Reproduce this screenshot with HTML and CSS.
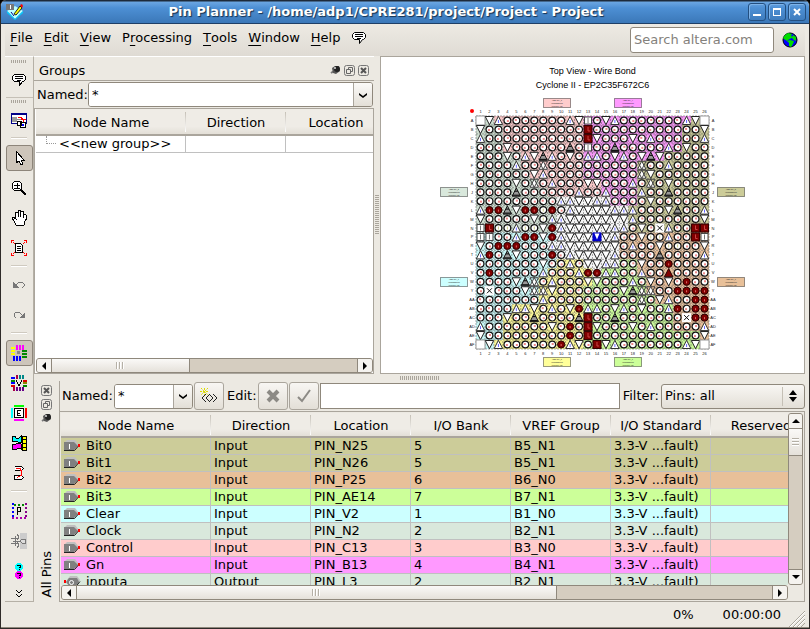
FILE: index.html
```html
<!DOCTYPE html>
<html lang="en">
<head>
    <meta charset="UTF-8">
    <meta name="viewport" content="width=device-width, initial-scale=1.0">
    <title>Pin Planner</title>
    <link rel="stylesheet" href="styles.css">
</head>
<body>
    <!-- shared icons -->
    <svg class="defs" width="0" height="0">
        <symbol id="comment" viewBox="0 0 16 16">
            <path d="M3.500 2.500h9l2 2v3l-2 2h-1l-3 4v-4h-5l-2-2v-3z" fill="#fff" stroke="#000"/>
            <path d="M4 4.500h8M4 6.500h8M6 8.500h4" stroke="#000"/>
        </symbol>
        <symbol id="pushpin" viewBox="0 0 11 11">
            <path d="M1 8l3-2" stroke="#777" stroke-width="2"/>
            <path d="M2 3l3-2h4l1 5-4 3-3-1z" fill="#555"/>
            <circle cx="7" cy="4" r="3" fill="#222"/>
            <circle cx="5" cy="3" r="1" fill="#ddd"/>
        </symbol>
        <symbol id="float" viewBox="0 0 11 11">
            <rect x=".5" y=".5" width="10" height="10" rx="2" fill="none" stroke="#777"/>
            <path d="M4.500 4.500v-2h4v4h-2M2.500 4.500h4v4h-4z" fill="none" stroke="#666"/>
        </symbol>
        <symbol id="close" viewBox="0 0 11 11">
            <rect x=".5" y=".5" width="10" height="10" rx="2" fill="none" stroke="#777"/>
            <path d="M3 3l5 5M8 3l-5 5" stroke="#555" stroke-width="2"/>
        </symbol>
        <symbol id="down" viewBox="0 0 10 8">
            <path d="M1 2l4 3 4-3v2l-4 3-4-3z" fill="#000"/>
        </symbol>
        <symbol id="left" viewBox="0 0 8 8"><path d="M6 0v8L2 4z"/></symbol>
        <symbol id="right" viewBox="0 0 8 8"><path d="M2 0v8l4-4z"/></symbol>
        <symbol id="up-arrow" viewBox="0 0 8 8"><path d="M0 6h8L4 2z"/></symbol>
        <symbol id="down-arrow" viewBox="0 0 8 8"><path d="M0 2h8L4 6z"/></symbol>
        <symbol id="pin-in" viewBox="0 0 17 12">
            <path d="M1 2l2-2h8l4 5-4 4z" fill="#c0c0c0"/>
            <path d="M0 2h10l4 4-4 4H0z" fill="#808080"/>
            <path d="M0 10.500h10.500l4-4.500" fill="none" stroke="#222"/>
            <path d="M5.500 4v5" stroke="#fff"/>
            <path d="M14 4h2v3h-2z" fill="#f00"/>
        </symbol>
        <symbol id="pin-out" viewBox="0 0 17 12">
            <path d="M3 4l3-4h7l3 4-3 5z" fill="#c0c0c0"/>
            <path d="M2 6l3-4h8l2 4-3 4H5z" fill="#808080"/>
            <path d="M4 10.500h8l4-5" fill="none" stroke="#222"/>
            <circle cx="7.500" cy="6.500" r="2" fill="none" stroke="#fff"/>
            <path d="M0 4h2v3H0z" fill="#f00"/>
        </symbol>
    </svg>

    <header class="titlebar">
        <svg width="18" height="16" viewBox="0 0 18 16">
            <path d="M1 7l8-5 8 5-8 8z" fill="#bff"/>
            <path d="M1 7l8 8 8-8v2l-8 7-8-7z" fill="#0cf"/>
            <path d="M0 0h8v6H0z" fill="#777"/><path d="M4.500 1v4" stroke="#fff"/>
            <path d="M8 10l6-8 2 2-6 7z" fill="#ff0" stroke="#222"/>
            <path d="M14 1l2-1 1 2-1 2z" fill="#f00"/>
            <path d="M5 8l3 4" stroke="#008"/>
        </svg>
        <h1>Pin Planner - /home/adp1/CPRE281/project/Project - Project</h1>
        <div class="win-buttons">
            <button aria-label="Minimize"><svg width="10" height="10"><path d="M1 7h8v2H1z" fill="#fff"/></svg></button>
            <button aria-label="Maximize"><svg width="10" height="10"><path d="M1 1h8v8H1zM2 3v5h6V3z" fill="#fff" fill-rule="evenodd"/></svg></button>
            <button aria-label="Close window"><svg width="10" height="10"><path d="M2 2l6 6M8 2l-6 6" stroke="#fff" stroke-width="2"/></svg></button>
        </div>
    </header>

    <nav class="menubar">
        <a href="#"><u>F</u>ile</a>
        <a href="#"><u>E</u>dit</a>
        <a href="#"><u>V</u>iew</a>
        <a href="#">P<u>r</u>ocessing</a>
        <a href="#"><u>T</u>ools</a>
        <a href="#"><u>W</u>indow</a>
        <a href="#"><u>H</u>elp</a>
        <a href="#" aria-label="Feedback"><svg width="16" height="16"><use href="#comment"/></svg></a>
        <input class="search" type="text" placeholder="Search altera.com" aria-label="Search altera.com">
        <button class="globe" aria-label="Search the web">
            <svg width="16" height="16" viewBox="0 0 16 16">
                <circle cx="8" cy="8" r="7" fill="#00f" stroke="#000"/>
                <path d="M3 3l3-2 4 1-1 2 2 1-3 2-2 1-1 1-3-2-1-1zM11 3l3 2v4l-2-1-2-2zM8 8l4 1-1 3-2 3-2-1v-3L5 9z" fill="#0d0"/>
            </svg>
        </button>
    </nav>

    <main>
        <aside class="tools">
            <div class="handle"></div>
            <button aria-label="Comment"><svg width="16" height="16"><use href="#comment"/></svg></button>
            <div class="handle second"></div>
            <button aria-label="Detach window">
                <svg width="16" height="16" viewBox="0 0 16 16">
                    <path d="M.5 1.500h15v10H.5z" fill="#fff" stroke="#008"/><path d="M0 1h16v2H0z" fill="#008"/>
                    <path d="M1 5h5v5H1z" fill="#999"/><path d="M6 7.500h4" stroke="#888"/>
                    <path d="M7 5.500h3l2 2v2M10 7.500h5" fill="none" stroke="#f00"/>
                    <path d="M6.500 9.500h4v4h-4zM9.500 10.500h5v5h-5z" fill="#fff" stroke="#000"/><path d="M12 12v2" stroke="#00f" stroke-width="2"/>
                </svg>
            </button>
            <hr>
            <button class="pressed" aria-label="Select">
                <svg width="16" height="16" viewBox="0 0 16 16"><path d="M5 1v12l3-2 2 4 2-1-2-4h3z" fill="#fff" stroke="#000"/></svg>
            </button>
            <button aria-label="Zoom">
                <svg width="16" height="16" viewBox="0 0 16 16">
                    <circle cx="6" cy="6" r="5" fill="#fff" stroke="#000"/>
                    <path d="M3 5.500h6M6 3v5M3 8.500h6" stroke="#000"/><path d="M10 10l5 5" stroke="#000" stroke-width="2"/>
                </svg>
            </button>
            <button aria-label="Pan">
                <svg width="16" height="16" viewBox="0 0 16 16">
                    <path d="M5 15l-2-4-2-3 1-1 3 2-1-6 1-1 2 1V1l2-1 1 2 2-1 1 3 2 1 1 3-2 3-1 4z" fill="#fff" stroke="#000"/>
                    <path d="M7 3v4M9.500 2v5M12 4v4" stroke="#000"/>
                </svg>
            </button>
            <button aria-label="Fit in window">
                <svg width="16" height="16" viewBox="0 0 16 16">
                    <path d="M0 0l4 4M16 0l-4 4M0 16l4-4M16 16l-4-4" stroke="#f00" stroke-dasharray="2 1"/>
                    <path d="M.5 3V.5H3M13 .5h2.500V3M.5 13v2.500H3M13 15.500h2.500V13" fill="none" stroke="#f00"/>
                    <path d="M4.500 3.500h5l2 2v7h-7z" fill="#fff" stroke="#000"/><path d="M6 6.500h4M6 8.500h4M6 10.500h4" stroke="#000"/>
                </svg>
            </button>
            <hr>
            <button aria-label="Undo">
                <svg width="16" height="16" viewBox="0 0 16 16"><path d="M5 8l3-3h3l2 2v2l-2 2" fill="none" stroke="#777"/><path d="M2 5v6h6z" fill="#777"/></svg>
            </button>
            <button aria-label="Redo">
                <svg width="16" height="16" viewBox="0 0 16 16"><path d="M11 8L8 5H5L3 7v2l2 2" fill="none" stroke="#777"/><path d="M14 5v6H8z" fill="#777"/></svg>
            </button>
            <hr>
            <button class="pressed" aria-label="Show I/O banks">
                <svg width="16" height="16" viewBox="0 0 16 16">
                    <path d="M6 0v5M9 0v5M12 0v5" stroke="#f0f" stroke-width="2"/>
                    <path d="M0 3h4M0 6h4M0 9h4" stroke="#ff0" stroke-width="2"/>
                    <path d="M11 6h5M11 9h5M11 12h5" stroke="#080" stroke-width="2"/>
                    <path d="M3 11v5M6 11v5M9 11v5" stroke="#00f" stroke-width="2"/><path d="M6 6h3v3H6z" fill="#888"/>
                </svg>
            </button>
            <button aria-label="Show VREF groups">
                <svg width="16" height="16" viewBox="0 0 16 16">
                    <path d="M0 3h4M0 8h4" stroke="#00f" stroke-width="2"/><path d="M0 6h4M12 11h4" stroke="#080" stroke-width="2"/>
                    <path d="M6 0v4M3 12v4" stroke="#a04" stroke-width="2"/><path d="M9 0v4M12 0v4" stroke="#088" stroke-width="2"/>
                    <path d="M12 6h4M0 11h4" stroke="#d00" stroke-width="2"/><path d="M12 8h4" stroke="#880" stroke-width="2"/>
                    <path d="M6 12v4M9 12v4M12 12v4" stroke="#608" stroke-width="2"/><path d="M5 5l3 6 3-6" fill="none" stroke="#000"/>
                </svg>
            </button>
            <button aria-label="Show edges">
                <svg width="16" height="16" viewBox="0 0 16 16">
                    <path d="M3 1h10" stroke="#0f0" stroke-width="2"/><path d="M3 15h10" stroke="#f0f" stroke-width="2"/>
                    <path d="M1 3v10" stroke="#0ff" stroke-width="2"/><path d="M15 3v10" stroke="#f00" stroke-width="2"/>
                    <path d="M3.500 3.500h9v9h-9z" fill="#fff" stroke="#000"/><path d="M10 5.500H6.500v5H10M6 8h3" fill="none" stroke="#000"/>
                </svg>
            </button>
            <button aria-label="Show DQ pins">
                <svg width="16" height="16" viewBox="0 0 16 16">
                    <path d="M1 1h3l1 2h3l2-2v6H7L5 6 1 7z" fill="#0ff" stroke="#000"/>
                    <path d="M1 9h4l1-1 4 1v5l-3-1-2 2-4-1 1-3z" fill="#f0f" stroke="#000"/>
                    <path d="M11.500 1v14h4V1zM11 4.500h4M11 8.500h4M11 12.500h4" fill="#ff0" stroke="#000"/>
                </svg>
            </button>
            <button aria-label="Show differential pairs">
                <svg width="16" height="16" viewBox="0 0 16 16">
                    <path d="M3.500 1.500h7l2 2-2 2h-7M3.500 10.500h7l2 2-2 2h-7z" fill="#fff" stroke="#000"/>
                    <path d="M5 3.500h4l1 2v5l-4 2" fill="none" stroke="#f00"/>
                </svg>
            </button>
            <hr>
            <button aria-label="Show pads">
                <svg width="16" height="16" viewBox="0 0 16 16">
                    <path d="M1.500 0v16" stroke="#00f" stroke-width="2" stroke-dasharray="2 2"/><path d="M14.500 0v16" stroke="#808" stroke-width="2" stroke-dasharray="2 2"/>
                    <path d="M3 1.500h12" stroke="#080" stroke-width="2" stroke-dasharray="2 2"/><path d="M1 14.500h14" stroke="#a0a" stroke-width="2" stroke-dasharray="2 2"/>
                    <path d="M6.500 12V4.500h3v4h-3" fill="none" stroke="#000"/>
                </svg>
            </button>
            <button aria-label="Pin connections">
                <svg width="16" height="16" viewBox="0 0 16 16">
                    <path d="M9 0h7v16H9z" fill="#ccc"/>
                    <path d="M0 5.500h6M0 10.500h6M2 8h8M4 3v10M6 1l2 3-2 3M6 9l2 3-2 3" fill="none" stroke="#777"/>
                    <path d="M9 8l2-2h3v4h-3z" fill="#ddd" stroke="#777"/>
                </svg>
            </button>
            <button aria-label="Help">
                <svg width="16" height="18" viewBox="0 0 16 18">
                    <circle cx="8" cy="5" r="4" fill="#0ff"/><circle cx="8" cy="13" r="4" fill="#f0f"/>
                    <path d="M6.500 4l1-1h2v2l-1 1M8.500 7v1M6.500 12l1-1h2v2l-1 1M8.500 15v1" fill="none" stroke="#000"/>
                </svg>
            </button>
            <button class="more" aria-label="More tools">
                <svg width="8" height="10" viewBox="0 0 8 10"><path d="M1 1l3 3 3-3M1 5l3 3 3-3" fill="none" stroke="#000"/></svg>
            </button>
        </aside>

        <div class="workspace">
            <div class="top">
                <section class="groups">
                    <div class="dock-title">
                        <h2>Groups</h2>
                        <button aria-label="Pin Groups"><svg width="11" height="11"><use href="#pushpin"/></svg></button>
                        <button aria-label="Float Groups"><svg width="11" height="11"><use href="#float"/></svg></button>
                        <button aria-label="Close Groups"><svg width="11" height="11"><use href="#close"/></svg></button>
                    </div>
                    <div class="named">
                        <label for="group-name">Named:</label>
                        <div class="combo">
                            <input id="group-name" type="text" value="*">
                            <button aria-label="Group names"><svg width="10" height="8"><use href="#down"/></svg></button>
                        </div>
                    </div>
                    <div class="group-box">
                        <div class="table-wrap">
                            <table class="group-table">
                                <thead><tr><th>Node Name</th><th>Direction</th><th>Location</th></tr></thead>
                                <tbody><tr><td><span class="branch"></span>&lt;&lt;new group&gt;&gt;</td><td></td><td></td></tr></tbody>
                            </table>
                        </div>
                        <div class="hscroll short">
                            <button aria-label="Scroll left"><svg width="8" height="8"><use href="#left"/></svg></button>
                            <div class="thumb"><i class="grip"></i></div>
                            <div class="track"></div>
                            <button aria-label="Scroll right"><svg width="8" height="8"><use href="#right"/></svg></button>
                        </div>
                    </div>
                </section>
                <div class="splitter"></div>
                <section class="chip">
                    <p>Top View - Wire Bond</p>
                    <p>Cyclone II - EP2C35F672C6</p>
                    <svg id="package" width="306" height="272" viewBox="0 0 306 272"></svg>
                </section>
            </div>
            <div class="row-splitter"></div>
            <section class="pins">
                <div class="pins-side">
                    <button aria-label="Close All Pins"><svg width="11" height="11"><use href="#close"/></svg></button>
                    <button aria-label="Float All Pins"><svg width="11" height="11"><use href="#float"/></svg></button>
                    <button aria-label="Pin All Pins"><svg width="11" height="11"><use href="#pushpin"/></svg></button>
                    <h2>All Pins</h2>
                </div>
                <div class="pins-main">
                    <div class="filter-bar">
                        <label for="pin-name">Named:</label>
                        <div class="combo small">
                            <input id="pin-name" type="text" value="*">
                            <button aria-label="Pin names"><svg width="10" height="8"><use href="#down"/></svg></button>
                        </div>
                        <button class="tool" aria-label="Node finder">
                            <svg width="18" height="16" viewBox="0 0 18 16">
                                <path d="M1 0l7 7M8 0L1 7M4.500 0v8M0 3.500h9" stroke="#dd0" stroke-dasharray="2 1"/>
                                <path d="M6 6l-4 4 4 4M10 6l-4 4 4 4M9 6l4 4-4 4M13 6l4 4-4 4" fill="none" stroke="#222"/>
                            </svg>
                        </button>
                        <label class="edit-label" for="edit">Edit:</label>
                        <button class="tool" aria-label="Cancel edit"><svg width="14" height="14"><path d="M2 2l10 10M12 2L2 12" stroke="#8c8a85" stroke-width="4"/></svg></button>
                        <button class="tool" aria-label="Accept edit"><svg width="14" height="14"><path d="M1 8l4 4 8-11" fill="none" stroke="#8c8a85" stroke-width="2"/></svg></button>
                        <input id="edit" class="edit" type="text">
                        <label class="filter-label" for="filter">Filter:</label>
                        <div class="select">
                            <select id="filter"><option>Pins: all</option></select>
                            <svg width="8" height="12" viewBox="0 0 8 12"><path d="M0 5h8L4 0zM0 7h8l-4 5z"/></svg>
                        </div>
                    </div>
                    <div class="pin-box">
                        <div class="table-wrap">
                            <table class="pin-table">
                                <thead>
                                    <tr><th>Node Name</th><th>Direction</th><th>Location</th><th>I/O Bank</th><th>VREF Group</th><th>I/O Standard</th><th>Reserved</th></tr>
                                </thead>
                                <tbody>
                                    <tr class="bank5"><td><svg width="17" height="12"><use href="#pin-in"/></svg>Bit0</td><td>Input</td><td>PIN_N25</td><td>5</td><td>B5_N1</td><td>3.3-V ...fault)</td><td></td></tr>
                                    <tr class="bank5"><td><svg width="17" height="12"><use href="#pin-in"/></svg>Bit1</td><td>Input</td><td>PIN_N26</td><td>5</td><td>B5_N1</td><td>3.3-V ...fault)</td><td></td></tr>
                                    <tr class="bank6"><td><svg width="17" height="12"><use href="#pin-in"/></svg>Bit2</td><td>Input</td><td>PIN_P25</td><td>6</td><td>B6_N0</td><td>3.3-V ...fault)</td><td></td></tr>
                                    <tr class="bank7"><td><svg width="17" height="12"><use href="#pin-in"/></svg>Bit3</td><td>Input</td><td>PIN_AE14</td><td>7</td><td>B7_N1</td><td>3.3-V ...fault)</td><td></td></tr>
                                    <tr class="bank1"><td><svg width="17" height="12"><use href="#pin-in"/></svg>Clear</td><td>Input</td><td>PIN_V2</td><td>1</td><td>B1_N0</td><td>3.3-V ...fault)</td><td></td></tr>
                                    <tr class="bank2"><td><svg width="17" height="12"><use href="#pin-in"/></svg>Clock</td><td>Input</td><td>PIN_N2</td><td>2</td><td>B2_N1</td><td>3.3-V ...fault)</td><td></td></tr>
                                    <tr class="bank3"><td><svg width="17" height="12"><use href="#pin-in"/></svg>Control</td><td>Input</td><td>PIN_C13</td><td>3</td><td>B3_N0</td><td>3.3-V ...fault)</td><td></td></tr>
                                    <tr class="bank4"><td><svg width="17" height="12"><use href="#pin-in"/></svg>Gn</td><td>Input</td><td>PIN_B13</td><td>4</td><td>B4_N1</td><td>3.3-V ...fault)</td><td></td></tr>
                                    <tr class="bank2"><td><svg width="17" height="12"><use href="#pin-out"/></svg>inputa</td><td>Output</td><td>PIN_L3</td><td>2</td><td>B2_N1</td><td>3.3-V ...fault)</td><td></td></tr>
                                </tbody>
                            </table>
                        </div>
                        <div class="vscroll">
                            <button aria-label="Scroll up"><svg width="8" height="8"><use href="#up-arrow"/></svg></button>
                            <div class="thumb"><i class="grip"></i></div>
                            <div class="track"></div>
                            <button aria-label="Scroll down"><svg width="8" height="8"><use href="#down-arrow"/></svg></button>
                        </div>
                        <div class="hscroll">
                            <button aria-label="Scroll left"><svg width="8" height="8"><use href="#left"/></svg></button>
                            <div class="thumb"><i class="grip"></i></div>
                            <div class="track"></div>
                            <button aria-label="Scroll right"><svg width="8" height="8"><use href="#right"/></svg></button>
                        </div>
                    </div>
                </div>
            </section>
        </div>
    </main>

    <footer class="status">
        <span>0%</span>
        <span>00:00:00</span>
        <svg width="16" height="16" viewBox="0 0 16 16"><path d="M0 16L16 0M4 16L16 4M8 16l8-8M12 16l4-4" stroke="#aaa69c"/><path d="M1 16L16 1M5 16L16 5M9 16l7-7" stroke="#fff"/></svg>
    </footer>

    <script src="pins.js"></script>
</body>
</html>
```

FILE: styles.css
```css
*{
    box-sizing: border-box;
}
body{
    margin: 0;
    height: 100vh;
    display: flex;
    flex-direction: column;
    overflow: hidden;
    background: #ece9e2;
    border: 1px solid #2e2a28;
    border-top: 0;
    border-radius: 6px 6px 0 0;
    font-family: "DejaVu Sans", Verdana, sans-serif;
    font-size: 13px;
    line-height: 16px;
    color: #000;
}
html{
    background: #000;
}
h1, h2, p{
    margin: 0;
    font-size: 13px;
    font-weight: normal;
}
button, input, select{
    font: inherit;
    color: inherit;
}
button{
    padding: 0;
    border: 0;
    background: none;
    display: flex;
    align-items: center;
    justify-content: center;
    flex: none;
}
svg{
    flex: none;
}
input{
    min-width: 0;
    outline: 0;
}
.defs{
    position: absolute;
}

/* title bar */
.titlebar{
    height: 24px;
    flex: none;
    display: flex;
    align-items: center;
    padding: 0 3px 0 5px;
    background: linear-gradient(#1d2a3a 0 1px, #6ba6e2 2px, #4d8fd4 8px, #3b78b8 23px, #1f3f66 23px);
}
.titlebar h1{
    flex: 1;
    text-align: center;
    font-weight: bold;
    color: #fff;
    text-shadow: 1px 1px 1px #14304f;
}
.win-buttons{
    display: flex;
    gap: 2px;
}
.win-buttons button{
    width: 18px;
    height: 18px;
    border: 1px solid #234f80;
    border-radius: 3px;
    box-shadow: inset 1px 1px #7db2e8;
}

/* menu */
.menubar{
    height: 32px;
    flex: none;
    display: flex;
    align-items: center;
    gap: 11px;
    margin: 0 4px;
    padding: 0 5px 4px 5px;
    background: linear-gradient(#edeae3, #dfdbd4);
}
.menubar a{
    color: #000;
    text-decoration: none;
    display: flex;
}
.menubar u{
    text-underline-offset: 3px;
}
.search{
    width: 144px;
    height: 26px;
    margin: 3px 0 0 auto;
    padding: 0 3px;
    border: 1px solid #8f887c;
    border-radius: 3px;
    background: #fff;
}
.search::placeholder{
    color: #84817c;
    opacity: 1;
}
.globe{
    margin: 3px 0 0 -5px;
    width: 20px;
}

main{
    flex: 1;
    min-height: 0;
    display: flex;
    margin: 0 4px;
}

/* left tool bar */
.tools{
    width: 29px;
    flex: none;
    display: flex;
    flex-direction: column;
    align-items: center;
    gap: 4px;
    padding-top: 3px;
    border-top: 1px solid #fff;
    border-right: 1px solid #b5b0a6;
    border-bottom: 1px solid #b5b0a6;
}
.tools button{
    width: 27px;
    height: 26px;
}
.tools .pressed{
    background: #cdc5ba;
    border: 1px solid #8d857a;
    border-radius: 3px;
}
.tools .more{
    height: 13px;
}
.tools svg{
    shape-rendering: crispEdges;
}
.tools hr{
    width: 16px;
    height: 4px;
    margin: 0;
    border: 0;
    background: linear-gradient(#cfcac0 0 1px, #fff 1px 2px, transparent 2px);
}
.handle{
    width: 16px;
    height: 3px;
    background: repeating-linear-gradient(90deg, #aaa59c 0 1px, transparent 1px 2px);
}
.second{
    width: 27px;
    height: 6px;
    border-top: 1px solid #c5c0b6;
    background-size: 16px 3px;
    background-position: center bottom;
    background-repeat: no-repeat;
}

.workspace{
    flex: 1;
    min-width: 0;
    display: flex;
    flex-direction: column;
}
.top{
    flex: 1;
    min-height: 0;
    display: grid;
    grid-template-columns: 4fr 6px 5fr;
}
.splitter{
    background: repeating-linear-gradient(#aaa59c 0 1px, transparent 1px 2px) center / 4px 40px no-repeat;
}
.row-splitter{
    height: 7px;
    background: repeating-linear-gradient(90deg, #aaa59c 0 1px, transparent 1px 2px) center / 40px 4px no-repeat;
}

/* groups */
.groups{
    min-width: 0;
    display: flex;
    flex-direction: column;
    border-top: 1px solid #fff;
}
.dock-title{
    height: 24px;
    display: flex;
    align-items: center;
    gap: 3px;
    padding: 4px 5px 0;
    border-bottom: 1px solid #aaa59c;
}
.dock-title h2{
    flex: 1;
}
.named{
    display: flex;
    align-items: center;
    padding: 1px 1px 1px 3px;
}
.combo{
    flex: 1;
    display: flex;
    height: 25px;
    border: 1px solid #8f887c;
    border-radius: 3px;
    background: #fff;
    overflow: hidden;
}
.combo input{
    flex: 1;
    padding: 0 3px;
    border: 0;
}
.combo button{
    width: 19px;
    border-left: 1px solid #aaa59c;
    background: linear-gradient(#fbfaf8, #e3dfd7);
}
.group-box{
    flex: 1;
    min-height: 0;
    display: flex;
    flex-direction: column;
    padding-left: 1px;
    border: 1px solid #aaa59c;
    background: #fff;
}
.table-wrap{
    flex: 1;
    min-width: 0;
    min-height: 0;
    overflow: hidden;
}
table{
    border-collapse: separate;
    border-spacing: 0;
    table-layout: fixed;
}
th{
    height: 26px;
    padding: 2px 0 0;
    font-weight: normal;
    white-space: nowrap;
    border-bottom: 2px solid #aaa59c;
    background: linear-gradient(#c5c0b6, #fff) right center / 1px 20px no-repeat, linear-gradient(#efece6 70%, #e3dfd7);
}
td{
    height: 17px;
    padding: 0 3px;
    white-space: nowrap;
    border-right: 1px solid #c0c0c0;
    border-bottom: 1px solid #c0c0c0;
}
.group-table{
    width: 350px;
}
.group-table th{
    height: 27px;
    padding-top: 3px;
}
.group-table th:first-child{
    width: 150px;
}
.group-table td:first-child{
    padding-left: 10px;
}
.branch{
    display: inline-block;
    width: 10px;
    height: 8px;
    margin-right: 3px;
    vertical-align: 4px;
    border-left: 1px dotted #999;
    border-bottom: 1px dotted #999;
}

/* scroll bars */
.hscroll, .vscroll{
    display: flex;
    background: #d5cdc0;
    border: 1px solid #8f887c;
    border-radius: 3px;
    overflow: hidden;
}
.hscroll{
    height: 15px;
}
.vscroll{
    width: 15px;
    flex-direction: column;
}
.hscroll button{
    width: 14px;
    background: #f5f3ef;
}
.vscroll button{
    height: 14px;
    background: #f5f3ef;
}
.thumb{
    display: flex;
    align-items: center;
    justify-content: center;
    background: linear-gradient(#faf9f7, #e5e1da);
    border: 0 solid #8f887c;
}
.hscroll .thumb{
    flex: 69;
    border-width: 0 1px;
}
.hscroll .track{
    flex: 31;
    border-right: 1px solid #8f887c;
}
.short .thumb{
    flex: 45;
}
.short .track{
    flex: 55;
}
.vscroll .thumb{
    height: 28px;
    border-width: 1px 0;
}
.vscroll .track{
    flex: 1;
    border-bottom: 1px solid #8f887c;
}
.grip{
    width: 8px;
    height: 7px;
    background: repeating-linear-gradient(90deg, #b5b0a6 0 1px, #fff 1px 2px, transparent 2px 3px);
}
.vscroll .grip{
    width: 7px;
    height: 8px;
    background: repeating-linear-gradient(#b5b0a6 0 1px, #fff 1px 2px, transparent 2px 3px);
}

/* chip view */
.chip{
    min-width: 0;
    display: flex;
    flex-direction: column;
    align-items: center;
    padding-top: 7px;
    overflow: hidden;
    background: #fff;
    border: 1px solid #aaa59c;
}
.chip p{
    font-family: "Liberation Sans", Arial, sans-serif;
    font-size: 9px;
    line-height: 14px;
}
.chip svg{
    margin-top: 5px;
}
.chip text{
    font-family: "Liberation Sans", Arial, sans-serif;
    font-size: 4px;
    text-anchor: middle;
    fill: #222;
}
.chip .tag{
    font-size: 2px;
}

/* all pins */
.pins{
    flex: none;
    display: flex;
}
.pins-side{
    width: 26px;
    display: flex;
    flex-direction: column;
    align-items: center;
    gap: 3px;
    padding: 4px 0 5px;
    border-right: 1px solid #aaa59c;
}
.pins-side h2{
    margin-top: auto;
    writing-mode: vertical-rl;
    transform: rotate(180deg);
}
.pins-main{
    flex: 1;
    min-width: 0;
}
.filter-bar{
    height: 30px;
    display: flex;
    align-items: center;
    gap: 1px;
    padding-left: 2px;
}
.edit-label{
    padding-left: 2px;
}
.filter-label{
    padding: 0 1px 0 2px;
}
.filter-bar .small{
    flex: none;
    width: 79px;
}
.filter-bar .tool{
    width: 30px;
    height: 28px;
    border: 1px solid #aaa59c;
    border-radius: 3px;
    background: linear-gradient(#f8f6f3, #e3dfd7);
}
.edit{
    flex: 1;
    height: 26px;
    border: 1px solid #8f887c;
    background: #fff;
}
.select{
    width: 144px;
    height: 25px;
    display: flex;
    align-items: center;
    padding-right: 7px;
    border: 1px solid #8f887c;
    border-radius: 3px;
    background: linear-gradient(#f8f6f3, #e3dfd7);
}
.select select{
    flex: 1;
    height: 19px;
    margin-right: 6px;
    padding: 0 3px;
    appearance: none;
    background: none;
    border: 0;
    border-right: 1px solid #c5c0b6;
}
.pin-box{
    height: 191px;
    display: grid;
    grid-template-columns: 1fr 15px;
    grid-template-rows: 1fr 15px;
    border: 1px solid #aaa59c;
    border-left: 0;
    padding: 1px;
}
.pin-table{
    width: 750px;
}
.pin-table th{
    height: 25px;
    width: 100px;
}
.pin-table th:first-child{
    width: 150px;
}
.pin-table td svg{
    margin: 0 5px 0 0;
    vertical-align: -2px;
}
.bank1{
    background: #ccffff;
}
.bank2{
    background: #d9e8dc;
}
.bank3{
    background: #ffcccc;
}
.bank4{
    background: #ff99ff;
}
.bank5{
    background: #cccc99;
}
.bank6{
    background: #e8c099;
}
.bank7{
    background: #ccff99;
}

.status{
    height: 26px;
    flex: none;
    display: flex;
    align-items: center;
    justify-content: flex-end;
    gap: 29px;
    padding-right: 4px;
    border-bottom: 1px solid #8f887c;
}
.status svg{
    margin-left: -29px;
    align-self: flex-end;
}
.status span:nth-child(2){
    padding-right: 8px;
}
```

FILE: pins.js
```javascript
// one letter per pin: o user i/o, d assigned, v gnd, a power, s clock, r assigned clock
const pins = [
    ' vaoooooooavsovaoooooooav ',
    'voooooooooooroooooooooooov',
    'aooooooooooorvooovoaoooooa',
    'ooovooooooAosooAoooooaovoo',
    'ooovoavAaovoaaovaovAvooooo',
    'ooooaoowoooooooooowooaoooo',
    'oooooovaoooooooooowvoooooo',
    'oooovowoaooovvoooaowovoooo',
    'ooooAooooooaooaoooaooAoooo',
    'oooooooooaavvaaoooovoooooo',
    'addAvddydoavvvvaaaooovAooa',
    'vooooovyaavvvvvvvaooooooov',
    'sryyayyvdavvvvvaaovoxaoorr',
    'ssooaddvdavvvbvaoovyyaoors',
    'vodddoooaavvvvvvoaoovyyoov',
    'adoAvooodoavvvvaooooAooooa',
    'ooooooovooaovvaaoovoodoooo',
    'odoooooaoooaddaaooaooRoooo',
    'oooovAwoaooovvoooaovovodoo',
    'oxooovwwvooooooovAwwoodddd',
    'oooooooaoooooooooowovaoodd',
    'ooooaavoaovdaaovaovooadodd',
    'ooovooAooooArooAoooooooxdd',
    'aooooooovodorvooovoaoooooa',
    'vooooooooodoroooooooooooov',
    ' vaoooooodavorvaoooooooav '
];
// bank areas of each row, as letter + number of cells
const areas = [
    'W1G1P10M12O1W1', 'G3P9M11O3', 'G3P9M11O3', 'G3P9M11O3', 'G5P7M9O5', 'G5P7M6O8', 'G6P6M6O8',
    'G7P7M4O8', 'G8P6M4O8', 'G9W6M3O8', 'G9W8O9', 'G9W8O9', 'G9W8O9', 'C9W7R10', 'C8W8R10', 'C9W7R10',
    'C9Y3W4L2R8', 'C8Y5W1L4R8', 'C7Y6L6R7', 'C7Y5L7R7', 'C7Y5L8R6', 'C4Y8L10R4', 'C3Y9L10R4',
    'C3Y9L10R4', 'C3Y9L13R1', 'W1C1Y10L13W1'
];
const fills = {
    G: '#ccdccf', P: '#f6c6c6', M: '#f696f6', O: '#c6c695', R: '#e6bd98',
    L: '#c6f696', Y: '#f8f494', C: '#c6f6f6', W: '#f6f6f6'
};
const rows = 'A B C D E F G H J K L M N P R T U V W Y AA AB AC AD AE AF'.split(' ');
const step = 8.96;

const up = 'M4.5 .3L8.700 8.500H.3z';
const down = 'M.3 .5H8.700L4.500 8.700z';
const ring = '<circle cx="4.500" cy="4.500" r="3.400" fill="#fff" stroke="#111" stroke-width="1.200"/>';

function shape(code, n) {
    const mark = `<rect x="${3 + n % 2}" y="${4 - n % 3 % 2}" width="2" height="2" fill="#e88"/>`;
    switch (code) {
        case 'o': return ring + mark;
        case 'y': return ring + '<rect x="4" y="3" width="1" height="3" fill="#cc8"/>';
        case 'd': return '<circle cx="4.500" cy="4.500" r="3.600" fill="#800000" stroke="#200"/><rect x="4" y="4" width="1" height="2" fill="#d66"/>';
        case 'v': return `<path d="${down}" fill="#fff" stroke="#222"/>`;
        case 'b': return `<path d="M0 0h9v9H0z" fill="#00c"/><path d="M2 1h5L4.500 7z" fill="#fff"/>`;
        case 'a': return `<path d="${up}" fill="#fff" stroke="#333"/><rect x="4" y="4" width="1" height="3" fill="#66f"/>`;
        case 'A': return `<path d="${up}" fill="#999" stroke="#111"/><path d="M3 3.500h3M1 7.500h7" stroke="#000"/>`;
        case 'R': return `<path d="${up}" fill="#800000" stroke="#200"/>`;
        case 'w': return `<path d="${up}" fill="#fff" stroke="#444"/><path d="${down}" fill="none" stroke="#444"/>`;
        case 's': return '<rect x="1" y="1" width="7" height="7" fill="#fff" stroke="#444"/><path d="M4.500 2v5" stroke="#777"/>';
        case 'r': return '<rect x=".5" y=".5" width="8" height="8" fill="#800000" stroke="#300"/><path d="M4.500 2v4h2" fill="none" stroke="#c44"/>';
        case 'x': return '<path d="M0 0h9v9H0z" fill="#fff"/><path d="M2 2l5 5M7 2l-5 5" stroke="#111"/>';
    }
    return '<path d="M0 0h9v9H0z" fill="#fff" stroke="#999"/>';
}

function tag(x, y, color, bank) {
    return `<rect x="${x + .5}" y="${y + .5}" width="27" height="9" fill="${color}" stroke="#000" stroke-opacity=".4"/>
        <text class="tag" x="${x + 14}" y="${y + 3}">IOBANK_${bank}</text>
        <text class="tag" x="${x + 14}" y="${y + 6}">(Unassigned)</text>
        <text class="tag" x="${x + 14}" y="${y + 9}">(Column I/O)</text>`;
}

let out = '<circle cx="32" cy="14" r="2" fill="#f00"/>';
let back = '';
let marks = '';
pins.forEach((line, r) => {
    let c = 0;
    for (const [, letter, count] of areas[r].matchAll(/([A-Z])(\d+)/g)) {
        back += `<rect x="${36 + c * step}" y="${19 + r * step}" width="${count * step}" height="${step + .1}" fill="${fills[letter]}"/>`;
        c += Number(count);
    }
    [...line].forEach((code, i) => {
        marks += `<g transform="translate(${36 + i * step} ${19 + r * step})">${shape(code, r * 5 + i)}</g>`;
    });
    const y = 25 + r * step;
    out += `<text x="32" y="${y}">${rows[r]}</text><text x="273" y="${y}">${rows[r]}</text>`;
    const x = 40.5 + r * step;
    out += `<text x="${x}" y="16">${r + 1}</text><text x="${x}" y="258">${r + 1}</text>`;
});
let grid = '';
for (let i = 0; i <= 26; i++) {
    grid += `M${36 + i * step} 19v233M36 ${19 + i * step}h233`;
}
out += back + `<path d="${grid}" stroke="#555" stroke-opacity=".5" stroke-dasharray="2 1"/>` + marks;
out += tag(103, 1, '#ffcccc', 3) + tag(174, 1, '#ff99ff', 4) + tag(0, 90, '#d9e8dc', 2) + tag(0, 180, '#ccffff', 1);
out += tag(277, 90, '#cccc99', 5) + tag(277, 180, '#e8c099', 6) + tag(103, 260, '#ffff99', 8) + tag(174, 260, '#ccff99', 7);
document.getElementById('package').innerHTML = out;
```
